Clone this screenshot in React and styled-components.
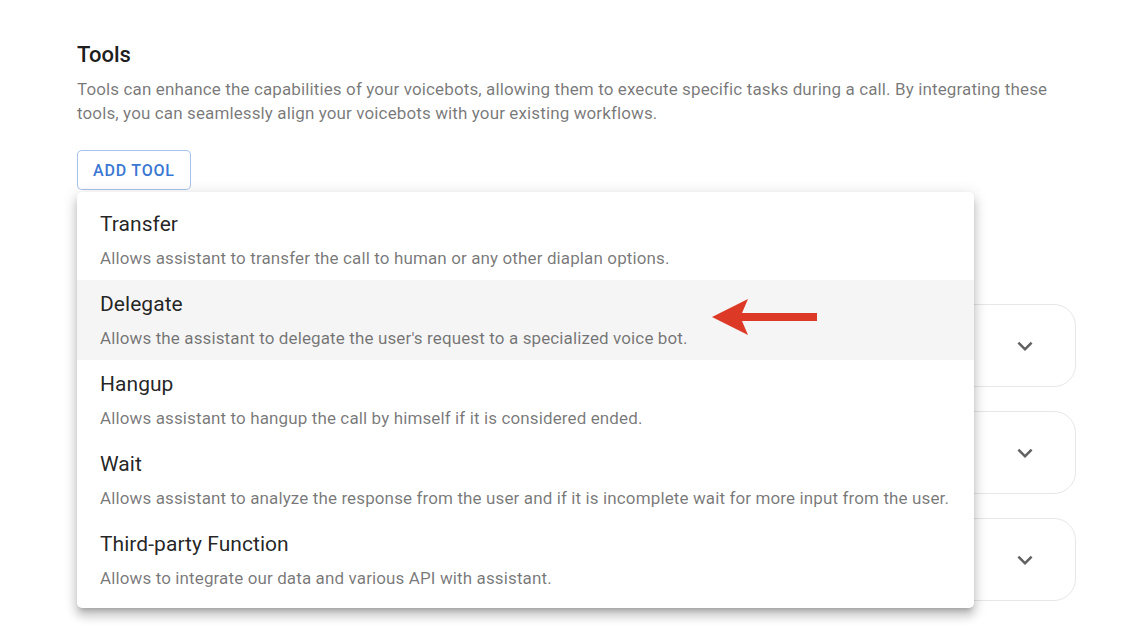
import React from 'react'
import styled, { createGlobalStyle } from 'styled-components'

const GlobalStyle = createGlobalStyle`
  html,
  body {
    margin: 0;
    padding: 0;
    background: #ffffff;
    font-family: Roboto, 'Liberation Sans', Arial, sans-serif;
  }
`

// page layout
const Page = styled.main`
  position: relative;
  box-sizing: border-box;
  width: 1128px;
  min-height: 644px;
  padding: 41px 52px 0 77px;
`

const Title = styled.h2`
  margin: 0;
  font-size: 22px;
  line-height: 28px;
  font-weight: 500;
  color: rgba(0, 0, 0, 0.9);
`

const Description = styled.p`
  margin: 8px 0 0;
  font-size: 17px;
  line-height: 24px;
  letter-spacing: 0.12px;
  color: rgba(0, 0, 0, 0.54);
`

const ButtonAnchor = styled.div`
  position: relative;
  margin-top: 25px;
  display: inline-block;
`

const OutlinedButton = styled.button`
  box-sizing: border-box;
  height: 40px;
  padding: 0 15px;
  font-family: inherit;
  font-size: 16px;
  font-weight: 500;
  letter-spacing: 0.8px;
  text-transform: uppercase;
  color: #3a78d3;
  background: #fff;
  border: 1px solid rgba(58, 120, 211, 0.45);
  border-radius: 5px;
  cursor: pointer;
`

// dropdown menu
const Menu = styled.ul`
  position: absolute;
  top: calc(100% + 2px);
  left: 0;
  z-index: 10;
  box-sizing: border-box;
  width: 897px;
  margin: 0;
  padding: 8px 0;
  list-style: none;
  background: #fff;
  border-radius: 5px;
  box-shadow: 0px 5px 5px -3px rgba(0, 0, 0, 0.2), 0px 8px 10px 1px rgba(0, 0, 0, 0.14),
    0px 3px 14px 2px rgba(0, 0, 0, 0.12);
`

const MenuItem = styled.li`
  box-sizing: border-box;
  height: 80px;
  padding: 10px 23px;
  display: flex;
  flex-direction: column;
  gap: 8px;
  background: ${(p) => (p.$active ? '#f5f5f5' : 'transparent')};
  cursor: pointer;
`

const ItemName = styled.span`
  font-size: 21px;
  line-height: 28px;
  letter-spacing: 0.05px;
  color: rgba(0, 0, 0, 0.87);
`

const ItemHint = styled.span`
  font-size: 17px;
  line-height: 24px;
  letter-spacing: 0.12px;
  white-space: nowrap;
  color: rgba(0, 0, 0, 0.54);
`

// accordion cards underneath the menu
const CardList = styled.section`
  margin-top: 114px;
  display: flex;
  flex-direction: column;
  gap: 24px;
`

const Card = styled.div`
  box-sizing: border-box;
  height: 83px;
  padding-right: 35px;
  display: flex;
  align-items: center;
  justify-content: flex-end;
  border: 1px solid #e7e7e7;
  border-radius: 22px;
  background: #fff;

  svg {
    display: block;
    color: rgba(0, 0, 0, 0.62);
  }
`

const Pointer = styled.svg`
  position: absolute;
  left: 712px;
  top: 298px;
  z-index: 20;
`

const tools = [
  { name: 'Transfer', hint: 'Allows assistant to transfer the call to human or any other diaplan options.' },
  { name: 'Delegate', hint: "Allows the assistant to delegate the user's request to a specialized voice bot." },
  { name: 'Hangup', hint: 'Allows assistant to hangup the call by himself if it is considered ended.' },
  {
    name: 'Wait',
    hint: 'Allows assistant to analyze the response from the user and if it is incomplete wait for more input from the user.',
  },
  { name: 'Third-party Function', hint: 'Allows to integrate our data and various API with assistant.' },
]

function ExpandIcon() {
  return (
    <svg width="30" height="30" viewBox="0 0 24 24" fill="currentColor">
      <path d="M16.59 8.59 12 13.17 7.41 8.59 6 10l6 6 6-6z" />
    </svg>
  )
}

export default function App() {
  return (
    <>
      <GlobalStyle />
      <Page>
        <Title>Tools</Title>
        <Description>
          Tools can enhance the capabilities of your voicebots, allowing them to execute specific tasks during a call. By
          integrating these tools, you can seamlessly align your voicebots with your existing workflows.
        </Description>

        <ButtonAnchor>
          <OutlinedButton>Add tool</OutlinedButton>
          <Menu>
            {tools.map((tool) => (
              <MenuItem key={tool.name} $active={tool.name === 'Delegate'}>
                <ItemName>{tool.name}</ItemName>
                <ItemHint>{tool.hint}</ItemHint>
              </MenuItem>
            ))}
          </Menu>
        </ButtonAnchor>

        <CardList>
          {[1, 2, 3].map((n) => (
            <Card key={n}>
              <ExpandIcon />
            </Card>
          ))}
        </CardList>

        <Pointer width="106" height="38" viewBox="0 0 106 38">
          <polygon points="0,19 36,1 30,15 105,15 105,23 30,23 36,37" fill="#dc3a26" />
        </Pointer>
      </Page>
    </>
  )
}
